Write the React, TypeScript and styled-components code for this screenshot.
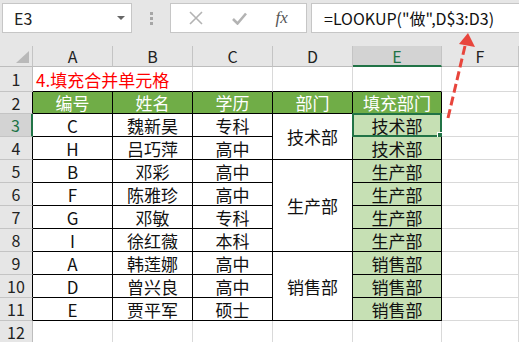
import styled, { createGlobalStyle } from "styled-components";

const GlobalStyle = createGlobalStyle`
  html, body {
    margin: 0;
    padding: 0;
    background: #fff;
  }
  body {
    font-family: "Noto Sans CJK SC", "Noto Sans", sans-serif;
    overflow: hidden;
  }
`;

const Page = styled.div`
  position: relative;
  width: 519px;
  height: 342px;
  overflow: hidden;
`;

const Toolbar = styled.div`
  height: 46px;
  background: #e6e6e6;
  display: flex;
  align-items: flex-start;
  padding: 3px 0 0 2px;
  box-sizing: border-box;
`;

const Box = styled.div<{ $w: string }>`
  height: 30px;
  width: ${(p) => p.$w};
  flex-shrink: 0;
  background: #fff;
  border: 1px solid #c6c6c6;
  box-sizing: border-box;
  display: flex;
  align-items: center;
`;

const NameBox = styled(Box)`
  justify-content: space-between;
  padding: 0 6px 0 11px;
  font-size: 16px;
  color: #222;
`;

const DropArrow = styled.div`
  width: 0;
  height: 0;
  border-left: 4px solid transparent;
  border-right: 4px solid transparent;
  border-top: 4px solid #666;
`;

const Grip = styled.div`
  width: 38px;
  height: 30px;
  display: flex;
  flex-direction: column;
  align-items: center;
  justify-content: center;
  gap: 2px;
  flex-shrink: 0;
`;

const GripDot = styled.span`
  width: 3px;
  height: 3px;
  background: #a6a6a6;
`;

const FuncBox = styled(Box)`
  justify-content: space-around;
  padding: 0 4px;
  margin-right: 4px;
`;

const Fx = styled.span`
  font-family: "Liberation Serif", serif;
  font-style: italic;
  font-size: 17px;
  color: #555;
`;

const FormulaBox = styled(Box)`
  padding-left: 12px;
  font-size: 16px;
  color: #111;
  white-space: nowrap;
`;

const Sheet = styled.div`
  display: grid;
  grid-template-columns: 33px 80px 80px 80px 80px 89px 1fr;
  grid-template-rows: 21px 25px 22px repeat(9, 23px) 23px;
`;

const Cell = styled.div<{
  $line?: string;
  $bottom?: string;
  $bg?: string;
  $color?: string;
  $span?: number;
  $cols?: number;
}>`
  box-sizing: border-box;
  display: flex;
  align-items: center;
  justify-content: center;
  font-size: 17px;
  line-height: 1;
  white-space: nowrap;
  color: ${(p) => p.$color || "#111"};
  background: ${(p) => p.$bg || "#fff"};
  border-right: 1px solid ${(p) => p.$line || "#d9d9d9"};
  border-bottom: 1px solid ${(p) => p.$bottom || p.$line || "#d9d9d9"};
  ${(p) => (p.$span ? `grid-row: span ${p.$span};` : "")}
  ${(p) => (p.$cols ? `grid-column: span ${p.$cols};` : "")}
  position: relative;
`;

const ColHead = styled.div<{ $active?: boolean }>`
  box-sizing: border-box;
  display: flex;
  align-items: center;
  justify-content: center;
  font-size: 16px;
  color: ${(p) => (p.$active ? "#217346" : "#222")};
  background: ${(p) => (p.$active ? "#d3d3d3" : "#e6e6e6")};
  border-right: 1px solid #c4c4c4;
  border-bottom: ${(p) => (p.$active ? "2px solid #217346" : "1px solid #bdbdbd")};
`;

const Corner = styled(ColHead)`
  position: relative;
  &::after {
    content: "";
    position: absolute;
    right: 3px;
    bottom: 3px;
    width: 13px;
    height: 12px;
    background: #b9b9b9;
    clip-path: polygon(100% 0, 100% 100%, 0 100%);
  }
`;

const RowHead = styled.div<{ $active?: boolean; $edge?: boolean }>`
  box-sizing: border-box;
  display: flex;
  align-items: center;
  justify-content: center;
  font-size: 16px;
  color: ${(p) => (p.$active ? "#217346" : "#222")};
  background: ${(p) => (p.$active ? "#d3d3d3" : "#e6e6e6")};
  border-bottom: 1px solid #c4c4c4;
  border-right: ${(p) =>
    p.$active ? "2px solid #217346" : p.$edge ? "1px solid #000" : "1px solid #bdbdbd"};
`;

const Title = styled(Cell)`
  justify-content: flex-start;
  padding-left: 3px;
  color: #ff0000;
`;

const Selection = styled.div`
  position: absolute;
  left: -1px;
  top: -1px;
  right: -1px;
  bottom: -1px;
  border: 2px solid #217346;
  pointer-events: none;
  &::after {
    content: "";
    position: absolute;
    right: -5px;
    bottom: -5px;
    width: 6px;
    height: 6px;
    background: #217346;
    border: 1px solid #fff;
  }
`;

const Arrow = styled.svg`
  position: absolute;
  left: 0;
  top: 0;
  pointer-events: none;
`;

type Row = { id: string; name: string; edu: string; dept?: string; span?: number; fill: string };

const rows: Row[] = [
  { id: "C", name: "魏新昊", edu: "专科", dept: "技术部", span: 2, fill: "技术部" },
  { id: "H", name: "吕巧萍", edu: "高中", fill: "技术部" },
  { id: "B", name: "邓彩", edu: "高中", dept: "生产部", span: 4, fill: "生产部" },
  { id: "F", name: "陈雅珍", edu: "高中", fill: "生产部" },
  { id: "G", name: "邓敏", edu: "专科", fill: "生产部" },
  { id: "I", name: "徐红薇", edu: "本科", fill: "生产部" },
  { id: "A", name: "韩莲娜", edu: "高中", dept: "销售部", span: 3, fill: "销售部" },
  { id: "D", name: "曾兴良", edu: "高中", fill: "销售部" },
  { id: "E", name: "贾平军", edu: "硕士", fill: "销售部" },
];

const headers = ["编号", "姓名", "学历", "部门", "填充部门"];

export default function App() {
  return (
    <Page>
      <GlobalStyle />
      <Toolbar>
        <NameBox $w="130px">
          E3
          <DropArrow />
        </NameBox>
        <Grip>
          <GripDot />
          <GripDot />
          <GripDot />
        </Grip>
        <FuncBox $w="137px">
          <svg width="14" height="14" viewBox="0 0 14 14">
            <path d="M1 1 L13 13 M13 1 L1 13" stroke="#b3b3b3" strokeWidth="1.6" fill="none" />
          </svg>
          <svg width="15" height="13" viewBox="0 0 15 13">
            <path d="M1 7 L5.5 11.5 L14 1.5" stroke="#b3b3b3" strokeWidth="2.6" fill="none" />
          </svg>
          <Fx>fx</Fx>
        </FuncBox>
        <FormulaBox $w="220px">=LOOKUP("做",D$3:D3)</FormulaBox>
      </Toolbar>

      <Sheet>
        <Corner />
        {["A", "B", "C", "D", "E", "F"].map((c) => (
          <ColHead key={c} $active={c === "E"}>
            {c}
          </ColHead>
        ))}

        <RowHead>1</RowHead>
        <Title $cols={2} $bottom="#000">4.填充合并单元格</Title>
        <Cell $bottom="#000" />
        <Cell $bottom="#000" />
        <Cell $bottom="#000" />
        <Cell />

        <RowHead $edge>2</RowHead>
        {headers.map((h) => (
          <Cell key={h} $line="#000" $bg="#70ad47" $color="#fff">
            {h}
          </Cell>
        ))}
        <Cell />

        {rows.map((r, i) => (
          <>
            <RowHead key={`h${i}`} $edge $active={i === 0}>
              {i + 3}
            </RowHead>
            <Cell key={`a${i}`} $line="#000">{r.id}</Cell>
            <Cell key={`b${i}`} $line="#000">{r.name}</Cell>
            <Cell key={`c${i}`} $line="#000">{r.edu}</Cell>
            {r.dept && (
              <Cell key={`d${i}`} $line="#000" $span={r.span}>
                {r.dept}
              </Cell>
            )}
            <Cell key={`e${i}`} $line="#000" $bg="#c6e0b4">
              {r.fill}
              {i === 0 && <Selection />}
            </Cell>
            <Cell key={`f${i}`} />
          </>
        ))}

        <RowHead>12</RowHead>
        <Cell />
        <Cell />
        <Cell />
        <Cell />
        <Cell />
        <Cell />
      </Sheet>

      <Arrow width="519" height="342">
        <path
          d="M448 118 L465 46"
          stroke="#e8453c"
          strokeWidth="3"
          strokeDasharray="9 4"
          fill="none"
        />
        <path d="M468 33 L475 47 L459 44 Z" fill="#e8453c" />
      </Arrow>
    </Page>
  );
}
